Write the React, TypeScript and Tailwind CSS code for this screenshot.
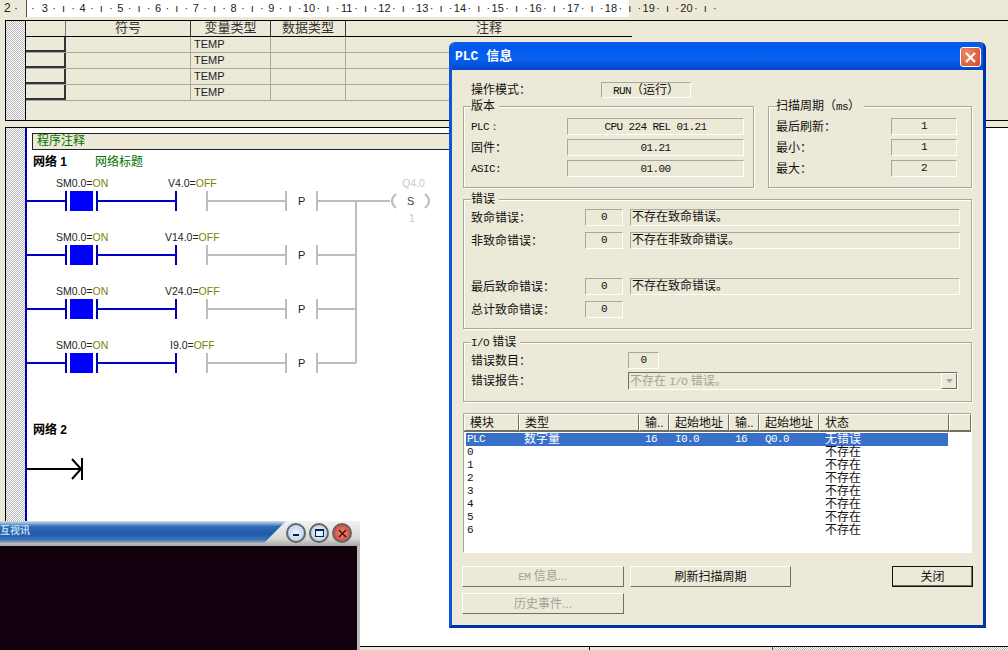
const cjk = "font-['Liberation_Sans','Noto_Sans_CJK_SC',sans-serif]"
const mono = "font-['Liberation_Mono'] text-[11px] tracking-[-0.6px]"
const sunken = 'border border-t-[#aca899] border-l-[#aca899] border-r-white border-b-white'
const raised = 'border border-t-white border-l-white border-r-[#716f64] border-b-[#716f64]'

const rulerNumbers = [3, 4, 5, 6, 7, 8, 9, 10, 11, 12, 13, 14, 15, 16, 17, 18, 19, 20]
const tableRows = [0, 1, 2, 3]
const rungs = [
  { y: 31, name: 'V4.0', x: 142 },
  { y: 85, name: 'V14.0', x: 139 },
  { y: 139, name: 'V24.0', x: 139 },
  { y: 193, name: 'I9.0', x: 144 },
]
const listRows = ['0', '1', '2', '3', '4', '5', '6']

function Ruler() {
  return (
    <div className="flex h-5 shrink-0 text-[12px] leading-4 text-[#222]">
      <div className="w-[26px] pl-[4px]">2 ·</div>
      <div className="flex h-[17px] w-[700px] border-l border-[#555] bg-[linear-gradient(to_right,#fff_602px,transparent_602px)] pl-[4px] font-['Liberation_Sans'] text-[11px]">
        <span className="w-[9px]">·</span>
        {rulerNumbers.map((n) => (
          <div key={n} className="grid w-[37.75px] shrink-0 grid-cols-4 text-center">
            <span className="-mx-1">{n}</span>
            <span>·</span>
            <span>ı</span>
            <span>·</span>
          </div>
        ))}
      </div>
    </div>
  )
}

function Gutter({ children }: { children: React.ReactNode }) {
  return (
    <div className="flex min-h-0 flex-1">
      <div className="w-5 shrink-0 border-l border-black bg-[repeating-conic-gradient(#b8b8b8_0_25%,#fff_0_50%)] bg-[length:2px_2px]" />
      {children}
    </div>
  )
}

function VarTable() {
  return (
    <div className="ml-[5px] flex h-[101px] shrink-0 flex-col border-t border-b border-black">
      <Gutter>
        <div className="flex-1 border-l border-black">
          <div className="flex h-[16px] w-[606px] border-b border-black text-center text-[13px] leading-[14px] text-[#333]">
            <div className="w-10 border-r border-[#777]" />
            <div className="w-[125px] border-r border-[#333]">符号</div>
            <div className="w-20 border-r border-[#333]">变量类型</div>
            <div className="w-[75px] border-r border-[#333]">数据类型</div>
            <div className="flex-1">注释</div>
          </div>
          {tableRows.map((r) => (
            <div key={r} className="flex h-4 w-[606px] border-b border-[#aca899] text-[11px] leading-[15px] text-[#222]">
              <div className="w-10 border-r-2 border-b-2 border-[#333] border-t-white" />
              <div className="w-[125px] border-r border-[#aca899]" />
              <div className="w-20 border-r border-[#aca899] pl-[3px]">TEMP</div>
              <div className="w-[75px] border-r border-[#aca899]" />
            </div>
          ))}
        </div>
      </Gutter>
    </div>
  )
}

function Ladder() {
  return (
    <svg width="424" height="250" className="-ml-px block" fontFamily="Liberation Sans" fontSize="10.5">
      {rungs.map((r) => (
        <g key={r.y}>
          <text x="30" y={r.y - 14} fill="#222">
            SM0.0=<tspan fill="#808000">ON</tspan>
          </text>
          <text x={r.x} y={r.y - 14} fill="#222">
            {r.name}=<tspan fill="#808000">OFF</tspan>
          </text>
          <path d={`M0 ${r.y}H39M71 ${r.y}H150`} stroke="#0000c8" strokeWidth="2" />
          <path d={`M40 ${r.y - 10}v20M71 ${r.y - 10}v20M150 ${r.y - 10}v20`} stroke="#0000a8" strokeWidth="2" />
          <rect x="44" y={r.y - 10} width="23" height="20" fill="#0000ff" />
          <path
            d={`M181 ${r.y - 10}v20M181 ${r.y}H260M260 ${r.y - 10}v20M291 ${r.y - 10}v20M291 ${r.y}H330`}
            stroke="#bdbdbd"
            strokeWidth="2"
            fill="none"
          />
          <text x="272" y={r.y + 4} fontSize="11" fill="#222">
            P
          </text>
        </g>
      ))}
      <path d="M330 31V193M330 31H364" stroke="#bdbdbd" strokeWidth="2" fill="none" />
      <path d="M370 24Q362 31 370 38M399 24Q407 31 399 38" stroke="#bdbdbd" strokeWidth="2" fill="none" />
      <text x="381" y="35" fontSize="11" fill="#444">
        S
      </text>
      <text x="376" y="17" fill="#c8c8c8">
        Q4.0
      </text>
      <text x="383" y="52" fill="#c8c8c8">
        1
      </text>
    </svg>
  )
}

function ProgramPanel() {
  return (
    <div className="mt-[6px] ml-[5px] flex min-h-0 flex-1 flex-col border-t border-black">
      <Gutter>
        <div className="flex-1 border-l-2 border-[#0000b0] bg-white">
          <div className="mt-[5px] ml-[5px] h-[17px] w-[870px] border border-[#222] bg-[#ece9d8] pl-1 text-[12px] leading-[15px] text-[#007000]">
            程序注释
          </div>
          <div className="flex h-5 items-end pl-[6px] text-[12px] leading-4">
            <span className="w-[62px] font-bold">网络 1</span>
            <span className="text-[#007000]">网络标题</span>
          </div>
          <Ladder />
          <div className="h-5 pl-[6px] text-[12px] leading-5 font-bold">网络 2</div>
          <svg width="60" height="26" className="mt-4 -ml-px block">
            <path d="M0 13H55M46 3L55 13L46 23" stroke="#000" strokeWidth="2" fill="none" />
            <path d="M56 2V24" stroke="#000" strokeWidth="2" />
          </svg>
        </div>
      </Gutter>
    </div>
  )
}

function Group({ title, className, children }: { title: React.ReactNode; className: string; children: React.ReactNode }) {
  return (
    <div className={`relative border border-[#aca899] shadow-[inset_1px_1px_0_#fff,1px_1px_0_#fff] ${className}`}>
      <span className="absolute -top-[9px] left-[7px] bg-[#ece9d8] pr-1 text-[12px] leading-4">{title}</span>
      {children}
    </div>
  )
}

function Field({ className, children }: { className: string; children?: React.ReactNode }) {
  return <div className={`${sunken} h-[17px] text-center leading-[15px] ${className}`}>{children}</div>
}

function VersionRow({ label, value }: { label: React.ReactNode; value: React.ReactNode }) {
  return (
    <div className="flex h-[17px] items-center">
      <div className="w-24">{label}</div>
      <Field className="w-[177px]">{value}</Field>
    </div>
  )
}

function ScanRow({ label, value }: { label: string; value: string }) {
  return (
    <div className="flex h-[17px] items-center justify-between">
      <span>{label}</span>
      <Field className={`w-[66px] ${mono}`}>{value}</Field>
    </div>
  )
}

function ErrorRow({ label, message, className = '' }: { label: string; message?: string; className?: string }) {
  return (
    <div className={`flex h-[17px] items-center ${className}`}>
      <div className="w-[114px]">{label}</div>
      <Field className={`w-[38px] ${mono}`}>0</Field>
      {message && <Field className="ml-[7px] w-[330px] pl-px text-left">{message}</Field>}
    </div>
  )
}

function ListHeadCell({ className, children }: { className: string; children?: React.ReactNode }) {
  return <div className={`${raised} h-full pl-[5px] leading-[17px] ${className}`}>{children}</div>
}

function ModuleList() {
  const cols = 'grid w-[482px] grid-cols-[52px_120px_30px_60px_30px_60px_130px]'
  return (
    <div className={`${sunken} mt-[11px] h-[140px] overflow-hidden border-t-[#716f64] border-l-[#716f64] bg-white`}>
      <div className="flex h-[18px] border-b border-[#716f64] bg-[#ece9d8]">
        <ListHeadCell className="w-[55px]">模块</ListHeadCell>
        <ListHeadCell className="w-[120px]">类型</ListHeadCell>
        <ListHeadCell className="w-[30px]">输..</ListHeadCell>
        <ListHeadCell className="w-[60px]">起始地址</ListHeadCell>
        <ListHeadCell className="w-[30px]">输..</ListHeadCell>
        <ListHeadCell className="w-[60px]">起始地址</ListHeadCell>
        <ListHeadCell className="w-[130px]">状态</ListHeadCell>
        <ListHeadCell className="flex-1" />
      </div>
      <div className="mt-px pl-[2px] leading-[13px]">
        <div className={`${cols} h-[13px] bg-[repeating-conic-gradient(#316ac5_0_25%,#3f76cc_0_50%)] bg-[length:2px_2px] text-white`}>
          <span className={`pl-px ${mono}`}>PLC</span>
          <span className="pl-[6px]">数字量</span>
          <span className={`pl-[7px] ${mono}`}>16</span>
          <span className={`pl-[7px] ${mono}`}>I0.0</span>
          <span className={`pl-[7px] ${mono}`}>16</span>
          <span className={`pl-[7px] ${mono}`}>Q0.0</span>
          <span className="pl-[7px]">无错误</span>
        </div>
        {listRows.map((r) => (
          <div key={r} className={`${cols} h-[13px]`}>
            <span className={`pl-px ${mono}`}>{r}</span>
            <span className="col-start-7 pl-[7px]">不存在</span>
          </div>
        ))}
      </div>
    </div>
  )
}

function Button({ className, children }: { className: string; children: React.ReactNode }) {
  return <button className={`h-[21px] text-center text-[12px] leading-4 ${raised} ${className}`}>{children}</button>
}

function PlcDialog() {
  return (
    <div className="absolute top-[42px] left-[449px] flex h-[586px] w-[537px] flex-col overflow-hidden rounded-t-[6px] border-r-3 border-b-3 border-l-3 border-r-[#0033a8] border-b-[#0033a8] border-l-[#0a55d8] bg-[#ece9d8] text-[12px] text-[#111]">
      <div className="flex h-7 shrink-0 items-center justify-between bg-[linear-gradient(to_bottom,#0a5ce0,#0058ee_20%,#0a62f0_60%,#0046c8)] px-[2px] pt-[2px] text-[13px] font-bold text-white">
        <span className="pl-px font-['Liberation_Mono','Noto_Sans_CJK_SC',monospace]">PLC 信息</span>
        <button className="flex h-5 w-[21px] items-center justify-center rounded-[3px] border border-white bg-[radial-gradient(circle_at_30%_30%,#ec8a66,#d8482a)]">
          <svg width="11" height="11" viewBox="0 0 11 11">
            <path d="M1 1L10 10M10 1L1 10" stroke="#fff" strokeWidth="2.2" />
          </svg>
        </button>
      </div>
      <div className="flex-1 px-[11px]">
        <div className="mt-3 flex h-4 items-center pl-2">
          <span className="w-[130px]">操作模式：</span>
          <Field className="h-[16px]! w-[90px]">
            <span className={mono}>RUN</span>（运行）
          </Field>
        </div>
        <div className="mt-2 flex justify-between">
          <Group title="版本" className="flex h-[82px] w-[291px] flex-col gap-1 pt-[11px] pl-[7px]">
            <VersionRow label={<span className={mono}>PLC：</span>} value={<span className={mono}>CPU 224 REL 01.21</span>} />
            <VersionRow label="固件：" value={<span className={mono}>01.21</span>} />
            <VersionRow label={<span className={mono}>ASIC:</span>} value={<span className={mono}>01.00</span>} />
          </Group>
          <Group
            title={
              <>
                扫描周期（<span className={mono}>ms</span>）
              </>
            }
            className="flex h-[82px] w-[204px] flex-col gap-1 pt-[11px] pr-[14px] pl-[7px]"
          >
            <ScanRow label="最后刷新：" value="1" />
            <ScanRow label="最小：" value="1" />
            <ScanRow label="最大：" value="2" />
          </Group>
        </div>
        <Group title="错误" className="mt-[11px] flex h-[130px] flex-col gap-[6px] pt-[9px] pl-[7px]">
          <ErrorRow label="致命错误：" message="不存在致命错误。" />
          <ErrorRow label="非致命错误：" message="不存在非致命错误。" />
          <ErrorRow label="最后致命错误：" message="不存在致命错误。" className="mt-[23px]" />
          <ErrorRow label="总计致命错误：" />
        </Group>
        <Group
          title={
            <>
              <span className={mono}>I/O</span> 错误
            </>
          }
          className="mt-[13px] h-[60px] pt-[9px] pl-[7px]"
        >
          <div className="flex h-[17px] items-center">
            <div className="w-[157px]">错误数目：</div>
            <Field className={`w-[31px] ${mono}`}>0</Field>
          </div>
          <div className="mt-[3px] flex h-[18px] items-center">
            <div className="w-[157px]">错误报告：</div>
            <div className="relative h-[18px] w-[330px] border border-t-[#716f64] border-l-[#716f64] border-r-white border-b-white pl-px leading-4 text-[#a5a294]">
              不存在 <span className={mono}>I/O</span> 错误。
              <div className={`absolute top-0 right-0 flex h-4 w-4 items-center justify-center ${raised}`}>
                <svg width="7" height="4" viewBox="0 0 7 4">
                  <path d="M0 0H7L3.5 4Z" fill="#a5a294" />
                </svg>
              </div>
            </div>
          </div>
        </Group>
        <ModuleList />
        <div className="mt-[13px] -ml-px flex">
          <div className="flex w-[162px] flex-col gap-[6px]">
            <Button className="text-[#a5a294]">
              <span className={mono}>EM</span> 信息...
            </Button>
            <Button className="text-[#a5a294]">历史事件...</Button>
          </div>
          <Button className="ml-[6px] w-[161px]">刷新扫描周期</Button>
          <Button className="ml-auto -mr-px w-[81px] border-[#111]! shadow-[inset_-1px_-1px_0_#716f64]">关闭</Button>
        </div>
      </div>
    </div>
  )
}

function RoundButton({ className, children }: { className: string; children: React.ReactNode }) {
  return (
    <div className={`flex h-[20px] w-[20px] items-center justify-center rounded-full border-2 border-[#666] ${className}`}>
      {children}
    </div>
  )
}

function MediaWindow() {
  return (
    <div className="absolute top-[521px] left-0 flex h-[129px] w-[360px] flex-col bg-[#bdbdb8]">
      <div className="relative h-[25px] shrink-0 bg-[linear-gradient(to_bottom,#f2f2f0,#d8d8d4_70%,#a8a8a4)]">
        <div className="h-[22px] w-[286px] bg-[linear-gradient(to_bottom,#d5dfe8_0,#2f6cb8_25%,#1f5aa8_60%,#3a74bc_85%,#a8a8a8)] [clip-path:polygon(0_0,100%_0,calc(100%-22px)_100%,0_100%)]">
          <span className="block text-[10px] leading-[20px] font-bold text-[#b8d4ee]">互视讯</span>
        </div>
        <div className="absolute top-[2px] left-[286px] flex gap-[3px]">
          <RoundButton className="bg-[radial-gradient(circle,#f4f8fc,#a8c8e8)]">
            <div className="mt-1 h-[2px] w-[6px] bg-[#0a2050]" />
          </RoundButton>
          <RoundButton className="bg-[radial-gradient(circle,#f4f8fc,#a8c8e8)]">
            <div className="h-[8px] w-[9px] border border-t-2 border-[#0a2050]" />
          </RoundButton>
          <RoundButton className="bg-[radial-gradient(circle,#f08a70,#c83a30)]">
            <svg width="9" height="9" viewBox="0 0 9 9">
              <path d="M1 1L8 8M8 1L1 8" stroke="#301010" strokeWidth="1.4" />
            </svg>
          </RoundButton>
        </div>
      </div>
      <div className="mr-[3px] flex-1 bg-[#12000f]" />
    </div>
  )
}

export default function App() {
  return (
    <div className={`relative flex h-[650px] w-[1008px] flex-col overflow-hidden bg-[#ece9d8] ${cjk}`}>
      <Ruler />
      <VarTable />
      <ProgramPanel />
      <div className="flex h-[4px] shrink-0 border-t border-black bg-[#ece9d8]">
        <div className="w-[590px] border-r border-black" />
        <div className="ml-[14px] w-[169px] border-r border-[#555]" />
        <div className="flex-1 bg-[repeating-conic-gradient(#b8b8b8_0_25%,#fff_0_50%)] bg-[length:2px_2px]" />
      </div>
      <PlcDialog />
      <MediaWindow />
    </div>
  )
}
